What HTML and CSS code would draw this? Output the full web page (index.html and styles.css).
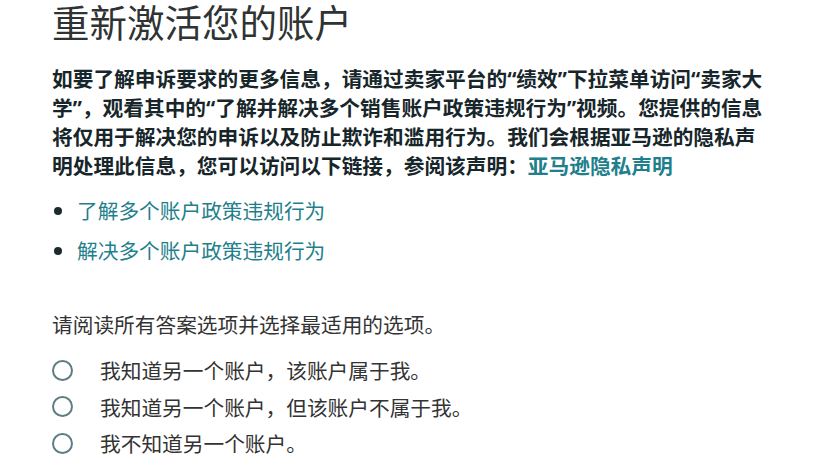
FILE: index.html
```html
<!DOCTYPE html>
<html lang="zh-CN">
<head>
<meta charset="utf-8">
<title>重新激活您的账户</title>
<link rel="stylesheet" href="styles.css">
</head>
<body>
<main class="page">
  <h1 class="title">重新激活您的账户</h1>
  <p class="intro">如要了解申诉要求的更多信息，请通过卖家平台的“绩效”下拉菜单访问“卖家大学”，观看其中的“了解并解决多个销售账户政策违规行为”视频。您提供的信息将仅用于解决您的申诉以及防止欺诈和滥用行为。我们会根据亚马逊的隐私声明处理此信息，您可以访问以下链接，参阅该声明：<a class="link" href="#">亚马逊隐私声明</a></p>
  <ul class="links">
    <li><a class="link" href="#">了解多个账户政策违规行为</a></li>
    <li><a class="link" href="#">解决多个账户政策违规行为</a></li>
  </ul>
  <p class="prompt">请阅读所有答案选项并选择最适用的选项。</p>
  <div class="options">
    <label class="option"><span class="radio"></span><span>我知道另一个账户，该账户属于我。</span></label>
    <label class="option"><span class="radio"></span><span>我知道另一个账户，但该账户不属于我。</span></label>
    <label class="option"><span class="radio"></span><span>我不知道另一个账户。</span></label>
  </div>
</main>
</body>
</html>
```
FILE: styles.css
```css
html, body {
  margin: 0;
  padding: 0;
  background: #ffffff;
}
body {
  font-family: "Noto Sans CJK SC", "Noto Sans", sans-serif;
  color: #333333;
}
.page {
  padding: 1px 0 0 52px;
  width: 740px;
}
.title {
  margin: 0;
  font-size: 37.5px;
  line-height: 40px;
  font-weight: 400;
  color: #2f3333;
}
.intro {
  margin: 24px 0 0;
  width: 716px;
  font-family: "Noto Sans", "Noto Sans CJK SC", sans-serif;
  font-size: 20.7px;
  line-height: 29px;
  font-weight: 700;
  color: #17262a;
}
.link {
  color: #1f7f8c;
  text-decoration: none;
}
.links {
  margin: 15px 0 0;
  padding: 0 0 0 25px;
  font-size: 20.7px;
  line-height: 28px;
}
.links li {
  margin-bottom: 12px;
}
.links li::marker {
  color: #1d2b2e;
}
.prompt {
  margin: 46px 0 0;
  font-size: 20.7px;
  line-height: 28px;
  color: #333333;
}
.options {
  margin-top: 14px;
  display: flex;
  flex-direction: column;
  font-size: 20.7px;
  color: #333333;
}
.option {
  display: flex;
  align-items: center;
  height: 36.5px;
  gap: 27px;
}
.radio {
  box-sizing: border-box;
  width: 21px;
  height: 21px;
  border: 2px solid #5d7d83;
  border-radius: 50%;
  flex: none;
}
```
